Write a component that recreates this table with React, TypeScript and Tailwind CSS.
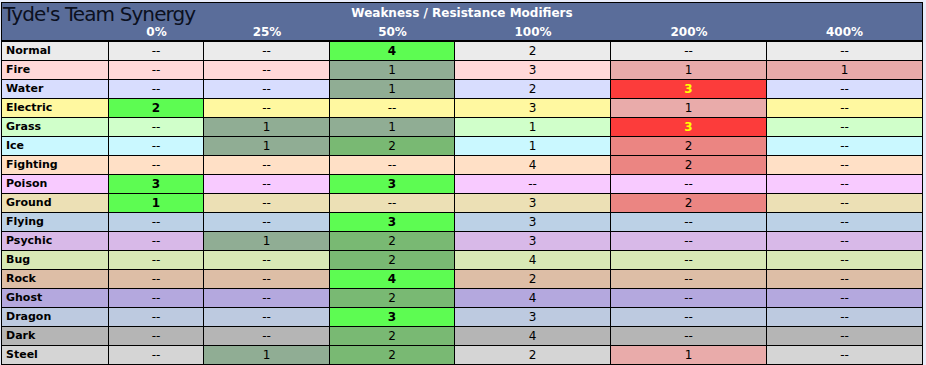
import React from "react";

type Kind = "n" | "g" | "m" | "gg" | "lr" | "mr" | "br";
type Cell = [string, Kind];

const kindClass: Record<Kind, string> = {
  n: "",
  g: "bg-[#5dfc52] font-bold",
  m: "bg-[#79b973]",
  gg: "bg-[#90ad94]",
  lr: "bg-[#e9abaa]",
  mr: "bg-[#eb8582]",
  br: "bg-[#fc3c3b] text-[#ffff00] font-bold",
};

const D: Cell = ["--", "n"];

const rows: { name: string; bg: string; cells: Cell[] }[] = [
  { name: "Normal", bg: "bg-[#ebebeb]", cells: [D, D, ["4", "g"], ["2", "n"], D, D] },
  { name: "Fire", bg: "bg-[#ffd8d8]", cells: [D, D, ["1", "gg"], ["3", "n"], ["1", "lr"], ["1", "lr"]] },
  { name: "Water", bg: "bg-[#d8ddfe]", cells: [D, D, ["1", "gg"], ["2", "n"], ["3", "br"], D] },
  { name: "Electric", bg: "bg-[#fff8a0]", cells: [["2", "g"], D, D, ["3", "n"], ["1", "lr"], D] },
  { name: "Grass", bg: "bg-[#d0ffca]", cells: [D, ["1", "gg"], ["1", "gg"], ["1", "n"], ["3", "br"], D] },
  { name: "Ice", bg: "bg-[#caf8ff]", cells: [D, ["1", "gg"], ["2", "m"], ["1", "n"], ["2", "mr"], D] },
  { name: "Fighting", bg: "bg-[#ffe0c6]", cells: [D, D, D, ["4", "n"], ["2", "mr"], D] },
  { name: "Poison", bg: "bg-[#f8caff]", cells: [["3", "g"], D, ["3", "g"], D, D, D] },
  { name: "Ground", bg: "bg-[#ece0b5]", cells: [["1", "g"], D, D, ["3", "n"], ["2", "mr"], D] },
  { name: "Flying", bg: "bg-[#bcd1e6]", cells: [D, D, ["3", "g"], ["3", "n"], D, D] },
  { name: "Psychic", bg: "bg-[#d8b9e8]", cells: [D, ["1", "gg"], ["2", "m"], ["3", "n"], D, D] },
  { name: "Bug", bg: "bg-[#d8e9b5]", cells: [D, D, ["2", "m"], ["4", "n"], D, D] },
  { name: "Rock", bg: "bg-[#ddbea6]", cells: [D, D, ["4", "g"], ["2", "n"], D, D] },
  { name: "Ghost", bg: "bg-[#b4a8de]", cells: [D, D, ["2", "m"], ["4", "n"], D, D] },
  { name: "Dragon", bg: "bg-[#bdcae0]", cells: [D, D, ["3", "g"], ["3", "n"], D, D] },
  { name: "Dark", bg: "bg-[#b5b5b5]", cells: [D, D, ["2", "m"], ["4", "n"], D, D] },
  { name: "Steel", bg: "bg-[#d5d5d5]", cells: [D, ["1", "gg"], ["2", "m"], ["2", "n"], ["1", "lr"], D] },
];

const cols = "grid grid-cols-[107px_95px_126px_125px_156px_156px_155px]";
const font = { fontFamily: '"DejaVu Sans", Verdana, sans-serif' };

export default function App() {
  return (
    <div className="w-[926px] h-[365px] overflow-hidden bg-[#e8ecfa] pt-[2px] pl-[1px]" style={font}>
      <div className="w-[922px] border-l border-r border-t border-black">
        <div className="bg-[#5a6d9a] h-[39px] border-b-2 border-black flex flex-col">
          <div className="grid grid-cols-[1fr_auto_1fr] h-[20px] items-center">
            <div className="pl-[1px] text-[20px] leading-[20px] tracking-[-0.9px] text-[#0b1020] whitespace-nowrap translate-y-[1px]">
              Tyde's Team Synergy
            </div>
            <div className="text-[12px] leading-[14px] font-bold text-white whitespace-nowrap">Weakness / Resistance Modifiers</div>
            <div />
          </div>
          <div className={`${cols} h-[17px] items-center text-[12px] leading-[14px] font-bold text-white text-center`}>
            <div />
            <div>0%</div>
            <div>25%</div>
            <div>50%</div>
            <div>100%</div>
            <div>200%</div>
            <div>400%</div>
          </div>
        </div>
        {rows.map((r) => (
          <div key={r.name} className={`${cols} h-[19px] border-b border-black text-[12px] leading-[14px] text-black ${r.bg}`}>
            <div className="border-r border-black font-bold text-[11px] pl-[4px] flex items-center">{r.name}</div>
            {r.cells.map((c, i) => (
              <div
                key={i}
                className={`flex items-center justify-center ${i < 5 ? "border-r border-black" : ""} ${kindClass[c[1]]}`}
              >
                {c[0]}
              </div>
            ))}
          </div>
        ))}
      </div>
    </div>
  );
}
